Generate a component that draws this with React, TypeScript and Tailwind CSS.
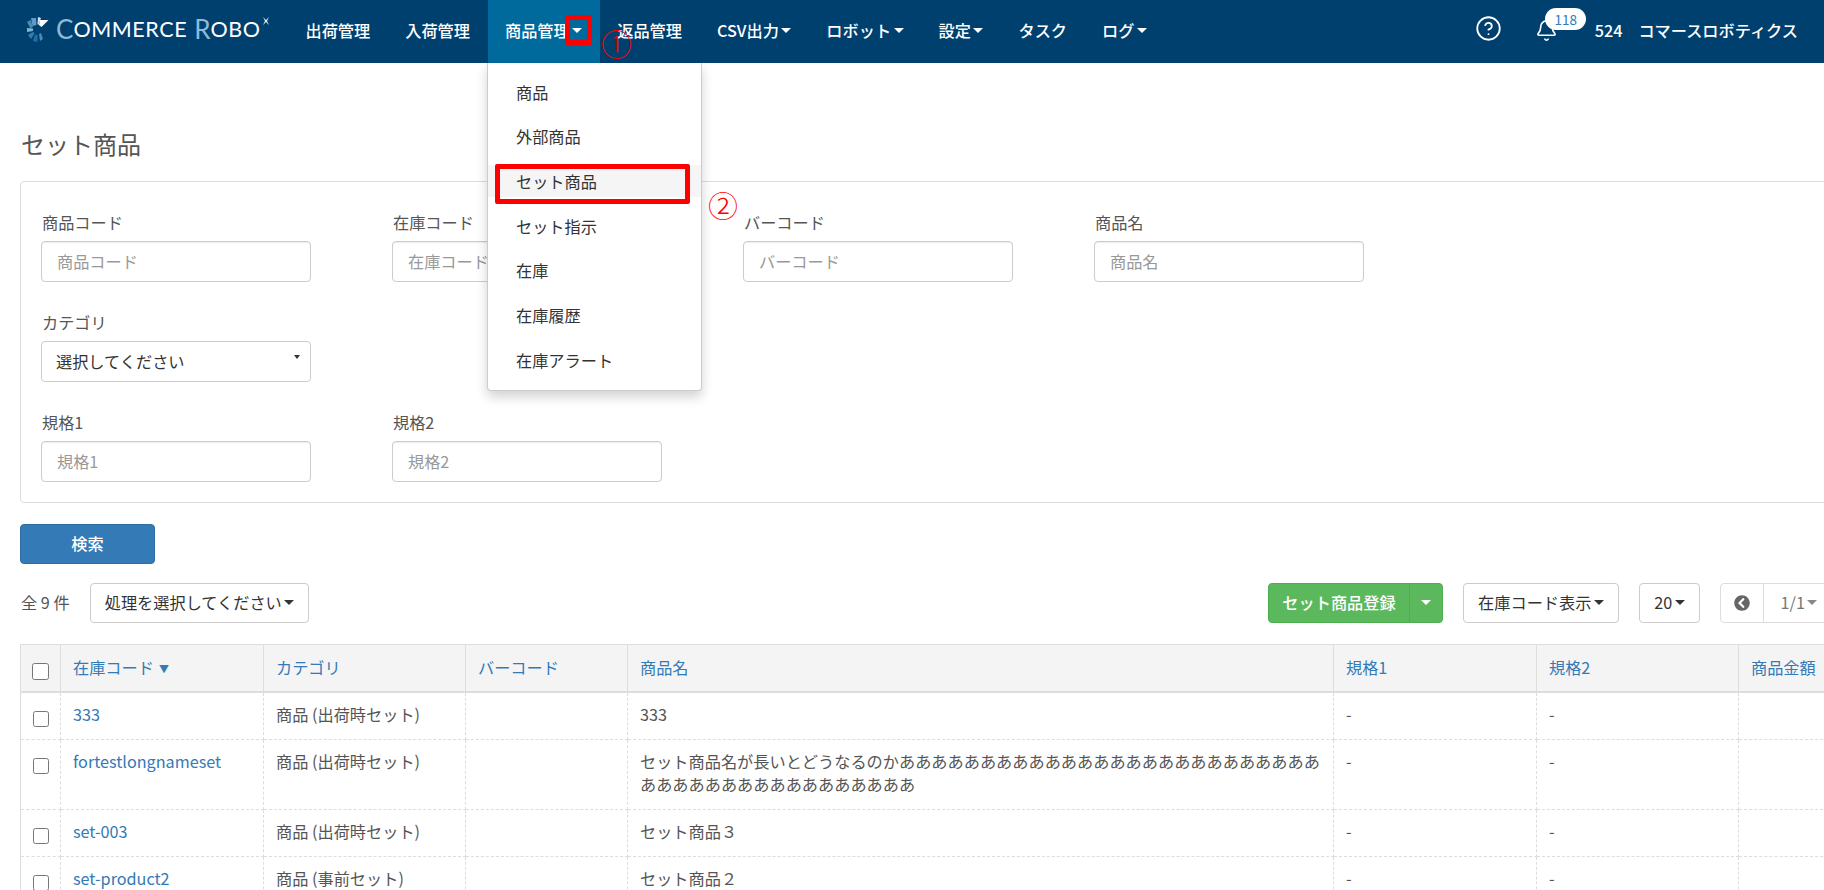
import React from "react";
import { Bell, CircleHelp } from "lucide-react";
import { FaChevronCircleLeft } from "react-icons/fa";

const navItems = [
  { label: "出荷管理" },
  { label: "入荷管理" },
  { label: "商品管理", caret: true, active: true },
  { label: "返品管理" },
  { label: "CSV出力", caret: true },
  { label: "ロボット", caret: true },
  { label: "設定", caret: true },
  { label: "タスク" },
  { label: "ログ", caret: true },
];

const menuItems = ["商品", "外部商品", "セット商品", "セット指示", "在庫", "在庫履歴", "在庫アラート"];

const headers = ["在庫コード", "カテゴリ", "バーコード", "商品名", "規格1", "規格2", "商品金額"];

const rows = [
  { code: "333", category: "商品 (出荷時セット)", name: "333" },
  {
    code: "fortestlongnameset",
    category: "商品 (出荷時セット)",
    name: "セット商品名が長いとどうなるのかあああああああああああああああああああああああああああああああああああああああああああ",
  },
  { code: "set-003", category: "商品 (出荷時セット)", name: "セット商品３" },
  { code: "set-product2", category: "商品 (事前セット)", name: "セット商品２" },
  { code: "set-product1", category: "商品 (事前セット)", name: "セット商品１" },
];

const Caret = ({ className = "border-t-[#333]" }: { className?: string }) => (
  <span
    className={`inline-block w-0 h-0 ml-[2.5px] align-middle border-x-[5px] border-t-[5px] border-x-transparent ${className}`}
  />
);

const Logo = () => (
  <div className="flex items-center text-white font-['Lato',sans-serif] font-normal leading-none">
    <svg width="22" height="25" viewBox="0 0 22 25" className="mr-[7px]">
      <polygon points="4,1 9,1 9.5,8 5.5,9" fill="#5f9cc5" />
      <polygon points="0,5 3.5,3 6,9.5 3.5,11.5" fill="#4b8bb8" />
      <polygon points="0,11 6,11.5 6,14 0,15" fill="#7fb4d6" />
      <polygon points="11,0 14,1 11.5,8 10.5,7" fill="#cfe3f0" />
      <polygon points="13,3 21.5,3 14.5,10 12,8" fill="#ffffff" />
      <polygon points="1,18 6,15 7.5,16.5 4,22" fill="#2f7fb2" />
      <polygon points="8,17.5 10.5,18 10.5,25 6,24" fill="#1f6fa5" />
      <polygon points="12,17 14,16 16,22 13,24" fill="#4b8bb8" />
    </svg>
    <span className="text-[26px] text-[#8cbbda]">C</span>
    <span className="text-[21.5px] mt-[2px] tracking-[0.6px]">OMMERCE</span>
    <span className="text-[26px] text-[#8cbbda] ml-[7px]">R</span>
    <span className="text-[21.5px] mt-[2px] tracking-[0.6px]">OBO</span>
    <svg width="8" height="8" viewBox="0 0 8 8" className="ml-[1px] mb-[17px]">
      <path d="M1 0 L4 3 L7 0 L5 4 L7 8 L4 5 L1 8 L3 4 Z" fill="#e5eef5" />
    </svg>
  </div>
);

const Field = ({ label, className = "" }: { label: string; className?: string }) => (
  <div className={className}>
    <label className="block pl-px text-[#555] mb-[6.5px]">{label}</label>
    <input
      placeholder={label}
      className="block w-[270px] h-[41px] px-[15px] border border-[#ccc] rounded-[4px] bg-white outline-none placeholder:text-[#999] shadow-[inset_0_1px_1px_rgba(0,0,0,0.075)]"
    />
  </div>
);

const ToolButton = ({ children, className = "" }: { children: React.ReactNode; className?: string }) => (
  <button className={`h-[40px] flex items-center justify-center bg-white border border-[#ccc] rounded-[4px] text-[#333] ${className}`}>
    {children}
  </button>
);

export default function App() {
  return (
    <div className="relative w-full h-[890px] overflow-hidden bg-white text-[16.2px] leading-[23px] text-[#555] font-['Noto_Sans_CJK_JP','Noto_Sans',sans-serif]">
      <nav className="flex h-[63px] bg-[#00406f] text-white font-medium">
        <div className="w-[288px] pl-[27px] flex items-center pb-[5px]">
          <Logo />
        </div>
        {navItems.map((item) => (
          <div
            key={item.label}
            className={`h-full px-[17.5px] flex items-center pb-[2px] ${item.active ? "bg-[#006a9c]" : ""}`}
          >
            {item.label}
            {item.caret && <Caret className="border-t-white" />}
          </div>
        ))}
        <div className="ml-auto flex items-center pr-[26px] pb-[2px]">
          <CircleHelp size={27} strokeWidth={1.6} className="mr-[33px] mb-[5px]" />
          <div className="relative mr-[37px]">
            <Bell size={23} strokeWidth={1.7} />
            <span className="absolute left-[10.5px] top-[-11px] w-[41px] h-[22px] rounded-full bg-white text-[#337ab7] text-[13.5px] leading-[22px] text-center font-normal">
              118
            </span>
          </div>
          <span className="mr-[16px]">524</span>
          <span>コマースロボティクス</span>
        </div>
      </nav>

      <main className="w-[1900px] px-[20px] pt-[64px]">
        <h1 className="text-[24px] leading-[34px] font-normal mb-[20px] pl-px">セット商品</h1>

        <section className="border border-[#ddd] rounded-[4px] pl-[20px] pt-[29px] pb-[20px]">
          <div className="grid grid-cols-[repeat(4,270px)] gap-x-[81px] gap-y-[29.5px]">
            <Field label="商品コード" />
            <Field label="在庫コード" />
            <Field label="バーコード" />
            <Field label="商品名" />
            <div className="col-start-1">
              <label className="block pl-px text-[#555] mb-[6.5px]">カテゴリ</label>
              <div className="relative">
                <select className="block w-[270px] h-[41px] px-[14px] border border-[#ccc] rounded-[4px] bg-white text-[#333] appearance-none outline-none">
                  <option>選択してください</option>
                </select>
                <span className="absolute right-[11px] top-[14px] w-0 h-0 border-x-[3px] border-t-[4px] border-x-transparent border-t-[#333]" />
              </div>
            </div>
            <Field label="規格1" className="col-start-1" />
            <Field label="規格2" />
          </div>
        </section>

        <button className="block mt-[21px] w-[135px] h-[40px] bg-[#337ab7] border border-[#2e6da4] rounded-[4px] text-white font-medium">
          検索
        </button>

        <div className="mt-[19px] w-[1815px] flex items-center">
          <span className="w-[70px] pl-px">全 9 件</span>
          <ToolButton className="w-[219px]">
            処理を選択してください
            <Caret />
          </ToolButton>
          <div className="ml-auto flex h-[40px] rounded-[4px] bg-[#5cb85c] border border-[#4cae4c] text-white font-medium">
            <span className="w-[141px] flex items-center justify-center border-r border-[#4cae4c]">セット商品登録</span>
            <span className="w-[32px] flex items-center justify-center">
              <Caret className="border-t-white !ml-0" />
            </span>
          </div>
          <ToolButton className="w-[156px] ml-[20px]">
            在庫コード表示
            <Caret />
          </ToolButton>
          <ToolButton className="w-[61px] ml-[20px]">
            20
            <Caret />
          </ToolButton>
          <div className="ml-[20px] flex h-[40px] border border-[#ddd] rounded-[4px] text-[#777]">
            <span className="w-[43px] flex items-center justify-center border-r border-[#ddd]">
              <FaChevronCircleLeft size={16} className="text-[#666]" />
            </span>
            <span className="w-[70px] flex items-center justify-center">
              1/1
              <Caret className="border-t-[#888]" />
            </span>
          </div>
        </div>

        <table className="mt-[21px] w-[1860px] table-fixed border-collapse border border-[#ddd]">
          <colgroup>
            <col className="w-[40px]" />
            <col className="w-[203px]" />
            <col className="w-[202px]" />
            <col className="w-[162px]" />
            <col className="w-[706px]" />
            <col className="w-[203px]" />
            <col className="w-[202px]" />
            <col />
          </colgroup>
          <thead>
            <tr className="h-[48px] bg-[#f4f4f4]">
              <th className="border border-[#ddd] border-b-2 pl-[11px] text-left align-middle">
                <input type="checkbox" className="block w-[17px] h-[17px] mt-[7px]" />
              </th>
              {headers.map((header, index) => (
                <th key={header} className="border border-[#ddd] border-b-2 px-[12px] text-left font-normal text-[#337ab7]">
                  {header}
                  {index === 0 && <span className="ml-[5px] text-[10px] align-[1px]">▼</span>}
                </th>
              ))}
            </tr>
          </thead>
          <tbody>
            {rows.map((row) => (
              <tr key={row.code} className="align-top">
                <td className="border border-dashed border-[#ddd] pl-[12px] pt-[18px]">
                  <input type="checkbox" className="block w-[16px] h-[16px]" />
                </td>
                <td className="border border-dashed border-[#ddd] px-[12px] pt-[10px] pb-[13px] text-[#337ab7]">{row.code}</td>
                <td className="border border-dashed border-[#ddd] px-[12px] pt-[10px] pb-[13px]">{row.category}</td>
                <td className="border border-dashed border-[#ddd] px-[12px] pt-[10px] pb-[13px]" />
                <td className="border border-dashed border-[#ddd] px-[12px] pt-[10px] pb-[13px] break-all">{row.name}</td>
                <td className="border border-dashed border-[#ddd] px-[12px] pt-[10px] pb-[13px]">-</td>
                <td className="border border-dashed border-[#ddd] px-[12px] pt-[10px] pb-[13px]">-</td>
                <td className="border border-dashed border-[#ddd] px-[12px] pt-[10px] pb-[13px]" />
              </tr>
            ))}
          </tbody>
        </table>
      </main>

      {/* dropdown opened from 商品管理 */}
      <div className="absolute left-[487px] top-[63px] w-[215px] h-[328px] pt-[13px] bg-white border border-[#ccc] border-t-0 rounded-b-[4px] shadow-[0_6px_12px_rgba(0,0,0,0.175)] flex flex-col gap-[12.7px] text-[#333]">
        {menuItems.map((item) => (
          <div
            key={item}
            className={`h-[32px] shrink-0 pl-[28px] flex items-center ${item === "セット商品" ? "bg-[#f5f5f5]" : ""}`}
          >
            {item}
          </div>
        ))}
      </div>

      {/* red annotations drawn over the screen */}
      <div className="absolute left-[565px] top-[15px] w-[27px] h-[30px] border-[5px] border-[#ff0000] rounded-[2px]" />
      <div className="absolute left-[495px] top-[164px] w-[195px] h-[40px] border-[5px] border-[#ff0000] rounded-[2px]" />
      <span className="absolute left-[601px] top-[26px] text-[31px] leading-[34px] text-[#ff0000] font-light">①</span>
      <span className="absolute left-[708px] top-[187px] text-[30px] leading-[34px] text-[#ff0000] font-light">②</span>
    </div>
  );
}
